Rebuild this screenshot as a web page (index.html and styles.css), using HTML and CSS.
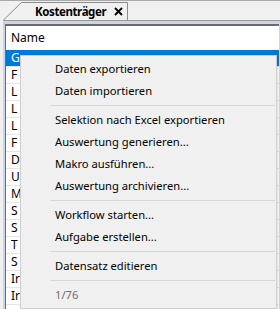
FILE: index.html
```html
<!DOCTYPE html>
<html lang="de">
<head>
    <meta charset="UTF-8">
    <title>Kostenträger</title>
    <link rel="stylesheet" href="styles.css">
</head>
<body>

<div class="tabs">
    <div class="tab">
        <svg class="tab-shape" width="126" height="20" viewBox="0 0 126 20">
            <path d="M0.5 20 L18.5 2.5 L124.5 2.5 L124.5 20" fill="#f0f0f0" stroke="#8c8c8c"/>
        </svg>
        <span class="tab-title">Kostenträger</span>
        <span class="tab-close">
            <svg width="9" height="9" viewBox="0 0 9 9">
                <path d="M1 1 L8 8 M8 1 L1 8" stroke="#000" stroke-width="1.8" fill="none"/>
            </svg>
        </span>
    </div>
</div>

<div class="frame">
    <div class="grid">
        <div class="grid-head">Name</div>
        <div class="row selected">G</div>
        <div class="row">F</div>
        <div class="row">L</div>
        <div class="row">L</div>
        <div class="row">L</div>
        <div class="row">F</div>
        <div class="row">D</div>
        <div class="row">U</div>
        <div class="row">M</div>
        <div class="row">S</div>
        <div class="row">S</div>
        <div class="row">T</div>
        <div class="row">S</div>
        <div class="row">Ir</div>
        <div class="row">Ir</div>
    </div>
</div>

<div class="menu">
    <div class="item">Daten exportieren</div>
    <div class="item">Daten importieren</div>
    <div class="sep"></div>
    <div class="item">Selektion nach Excel exportieren</div>
    <div class="item">Auswertung generieren...</div>
    <div class="item">Makro ausführen...</div>
    <div class="item">Auswertung archivieren...</div>
    <div class="sep"></div>
    <div class="item">Workflow starten...</div>
    <div class="item">Aufgabe erstellen...</div>
    <div class="sep"></div>
    <div class="item">Datensatz editieren</div>
    <div class="sep"></div>
    <div class="item disabled">1/76</div>
</div>

</body>
</html>
```

FILE: styles.css
```css
body {
    margin: 0;
    width: 280px;
    height: 309px;
    overflow: hidden;
    background-color: #f0f0f0;
    font-family: "Noto Sans", "Open Sans", sans-serif;
    font-size: 11.2px;
    color: #000;
    position: relative;
}
.tabs {
    height: 19px;
    border-top: 1px solid #a9a9a9;
    padding-left: 3px;
    display: flex;
    align-items: flex-end;
}
.tab {
    position: relative;
    width: 126px;
    height: 20px;
    display: flex;
    align-items: center;
    padding-left: 32px;
    box-sizing: border-box;
    margin-top: -1px;
}
.tab-shape {
    position: absolute;
    left: 0;
    top: 0;
}
.tab-title {
    position: relative;
    flex: none;
    font-weight: bold;
    font-size: 11.5px;
    letter-spacing: -0.4px;
    padding-top: 2px;
}
.tab-close {
    position: relative;
    flex: none;
    display: flex;
    margin-left: 8px;
    margin-top: 3px;
}
.frame {
    margin-left: 3px;
    border-top: 1px solid #9a9a9a;
    background-color: #c9d5ee;
    padding: 3px 1px 0 2px;
    height: 289px;
}
.grid {
    background-color: #fff;
    border-top: 2px solid #6b6b6b;
    border-left: 1px solid #6b6b6b;
    height: 100%;
    overflow: hidden;
}
.grid-head {
    height: 24px;
    line-height: 24px;
    padding-left: 5px;
    font-size: 12px;
}
.row {
    height: 16px;
    line-height: 16px;
    padding-left: 5px;
    font-size: 12px;
    border-bottom: 1px solid #e6e6e6;
}
.row.selected {
    background-color: #0078d7;
    color: #fff;
}
.menu {
    position: absolute;
    left: 20px;
    top: 55px;
    width: 251px;
    padding: 2px;
    background-color: #f0f0f0;
    border: 1px solid #cfcfcf;
    box-shadow: 1px 1px 2px rgba(0, 0, 0, 0.15);
}
.item {
    height: 22px;
    line-height: 22px;
    padding-left: 32px;
}
.item.disabled {
    color: #6d6d6d;
}
.sep {
    height: 7px;
    margin-left: 27px;
    margin-right: -1px;
    background: linear-gradient(#d7d7d7, #d7d7d7) no-repeat 0 3px / 100% 1px;
}
```
